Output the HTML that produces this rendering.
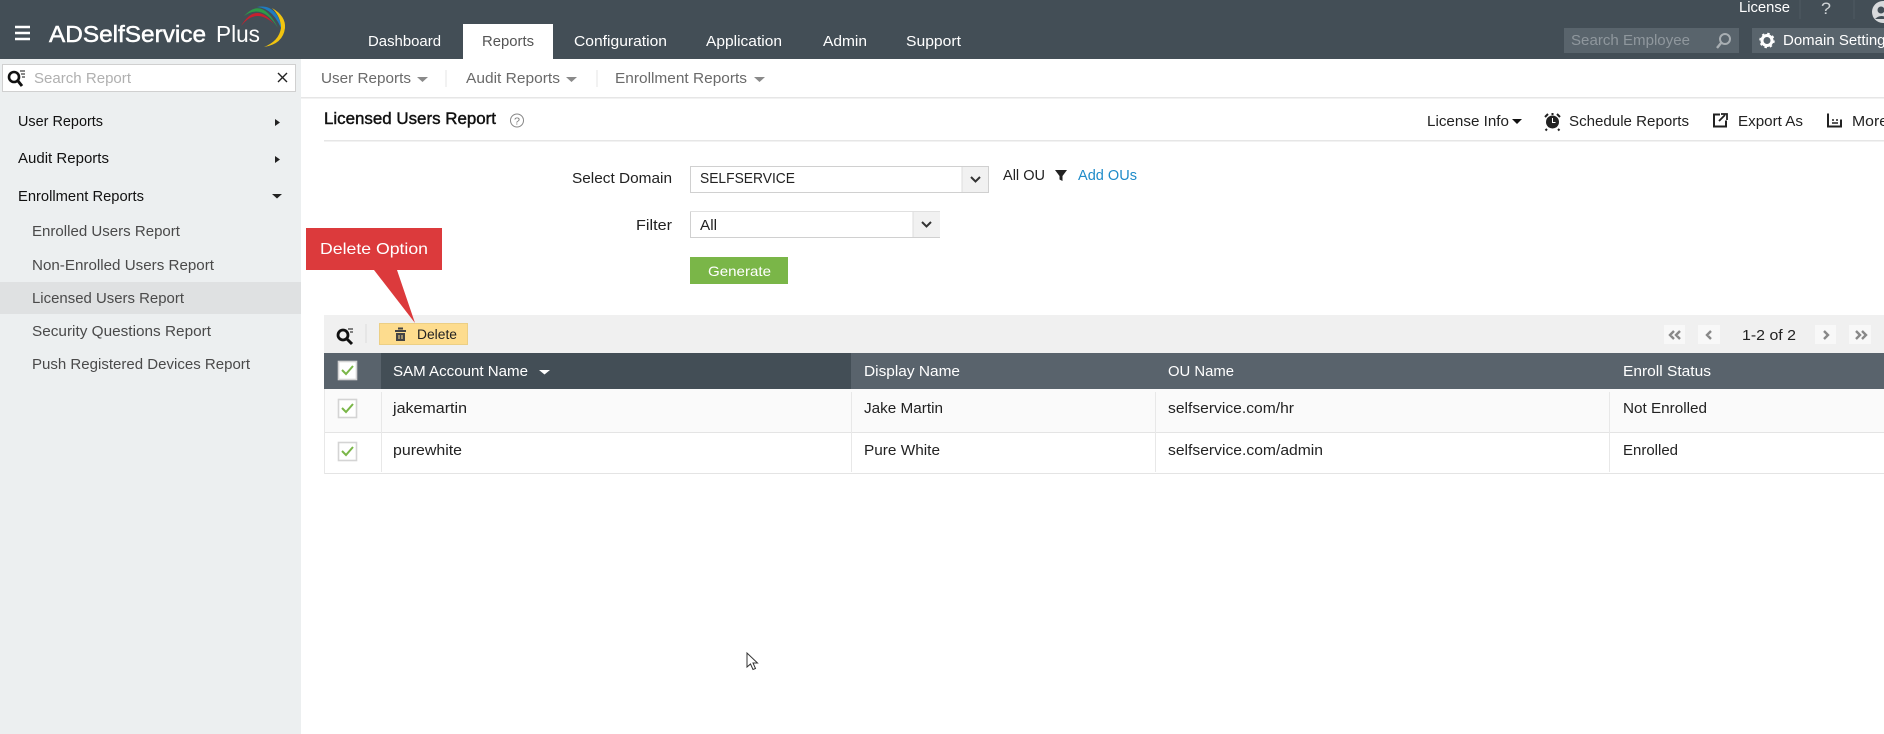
<!DOCTYPE html>
<html lang="en"><head><meta charset="utf-8"><title>Licensed Users Report - ADSelfService Plus</title>
<style>
html,body{margin:0;padding:0;background:#fff;width:1884px;height:734px;overflow:hidden}
svg{display:block}
text{font-family:"Liberation Sans",sans-serif;font-size:14.5px;fill:#222}
.w{fill:#fff}.s{fill:#4a4a4a}.n{fill:#6a6a6a}.b{font-size:15px;fill:#111}
</style></head><body>
<svg width="1884" height="734" viewBox="0 0 1884 734" xmlns="http://www.w3.org/2000/svg">
<!-- header -->
<rect width="1884" height="59" fill="#434e56"/>
<path d="M15 27h15M15 33h15M15 39h15" stroke="#fff" stroke-width="2.4"/>
<text class="w" x="49" y="42" textLength="157" lengthAdjust="spacingAndGlyphs" style="font-size:23px;stroke:#fff;stroke-width:.5">ADSelfService</text>
<text class="w" x="216" y="42" textLength="44" lengthAdjust="spacingAndGlyphs" style="font-size:23px">Plus</text>
<path d="M241 26Q256 1 274 24Q256 7 241 26Z" fill="#c8202f"/>
<path d="M244 16Q262 -4 278 28Q262 3 244 16Z" fill="#2e9b48"/>
<path d="M257 7Q278 3 283 33Q274 8 257 7Z" fill="#1f7cc0"/>
<path d="M272 8Q286 16 285 28Q283 44 264 47Q279 41 281 28Q281 17 272 8Z" fill="#f1c40f"/>
<rect x="463" y="24" width="90" height="35" fill="#fff"/>
<text class="w" x="368" y="46" textLength="73" lengthAdjust="spacingAndGlyphs">Dashboard</text>
<text x="482" y="46" textLength="52" lengthAdjust="spacingAndGlyphs" style="fill:#555">Reports</text>
<text class="w" x="574" y="46" textLength="93" lengthAdjust="spacingAndGlyphs">Configuration</text>
<text class="w" x="706" y="46" textLength="76" lengthAdjust="spacingAndGlyphs">Application</text>
<text class="w" x="823" y="46" textLength="44" lengthAdjust="spacingAndGlyphs">Admin</text>
<text class="w" x="906" y="46" textLength="55" lengthAdjust="spacingAndGlyphs">Support</text>
<text class="w" x="1739" y="12" textLength="51" lengthAdjust="spacingAndGlyphs">License</text>
<path d="M1800 0v19M1854 0v19" stroke="#4f5a62"/>
<text x="1821" y="14" textLength="10" lengthAdjust="spacingAndGlyphs" style="fill:#cfd3d6;font-size:17px">?</text>
<circle cx="1883" cy="12" r="11" fill="#d8dadc"/>
<circle cx="1881" cy="10" r="3.500" fill="#434e56"/>
<path d="M1875 19q6-6 14 0z" fill="#434e56"/>
<rect x="1564" y="28" width="175" height="25" fill="#59646c"/>
<text x="1571" y="45" textLength="119" lengthAdjust="spacingAndGlyphs" style="fill:#8f979d">Search Employee</text>
<circle cx="1725" cy="39" r="5" fill="none" stroke="#a8aeb2" stroke-width="2"/>
<path d="M1721 43l-4 5" stroke="#a8aeb2" stroke-width="2.4"/>
<rect x="1752" y="28" width="132" height="25" fill="#59646c"/>
<circle cx="1767" cy="40.500" r="5" fill="none" stroke="#fff" stroke-width="3"/>
<circle cx="1767" cy="40.500" r="7" fill="none" stroke="#fff" stroke-width="1.500" stroke-dasharray="2.500 3"/>
<text class="w" x="1783" y="45" textLength="110" lengthAdjust="spacingAndGlyphs">Domain Settings</text>
<!-- sidebar -->
<rect y="59" width="301" height="675" fill="#eceff0"/>
<rect x="2.500" y="64.500" width="293" height="27" fill="#fff" stroke="#d0d0d0"/>
<circle cx="14" cy="77" r="5" fill="none" stroke="#111" stroke-width="2.600"/>
<path d="M18 81l4 5" stroke="#111" stroke-width="3"/>
<path d="M20 71h5M21 74h4M22 77h3" stroke="#111" stroke-width="1"/>
<text x="34" y="83" textLength="97" lengthAdjust="spacingAndGlyphs" style="fill:#b0b0b0">Search Report</text>
<path d="M278 73l9 9M287 73l-9 9" stroke="#222" stroke-width="1.400"/>
<text class="b" x="18" y="126" textLength="85" lengthAdjust="spacingAndGlyphs">User Reports</text>
<text class="b" x="18" y="163" textLength="91" lengthAdjust="spacingAndGlyphs">Audit Reports</text>
<text class="b" x="18" y="201" textLength="126" lengthAdjust="spacingAndGlyphs">Enrollment Reports</text>
<path d="M275 119l5 3.500-5 3.500zM275 156l5 3.500-5 3.500zM272 194h10l-5 4.500z" fill="#222"/>
<rect y="282" width="301" height="32" fill="#dfe1e2"/>
<text class="s" x="32" y="236" textLength="148" lengthAdjust="spacingAndGlyphs">Enrolled Users Report</text>
<text class="s" x="32" y="270" textLength="182" lengthAdjust="spacingAndGlyphs">Non-Enrolled Users Report</text>
<text class="s" x="32" y="303" textLength="152" lengthAdjust="spacingAndGlyphs">Licensed Users Report</text>
<text class="s" x="32" y="336" textLength="179" lengthAdjust="spacingAndGlyphs">Security Questions Report</text>
<text class="s" x="32" y="369" textLength="218" lengthAdjust="spacingAndGlyphs">Push Registered Devices Report</text>
<!-- sub nav -->
<rect x="301" y="97" width="1583" height="1.500" fill="#e6e6e6"/>
<text class="n" x="321" y="83" textLength="90" lengthAdjust="spacingAndGlyphs">User Reports</text>
<text class="n" x="466" y="83" textLength="94" lengthAdjust="spacingAndGlyphs">Audit Reports</text>
<text class="n" x="615" y="83" textLength="132" lengthAdjust="spacingAndGlyphs">Enrollment Reports</text>
<path d="M417 77h11l-5.500 5zM566 77h11l-5.500 5zM754 77h11l-5.500 5z" fill="#8a8a8a"/>
<path d="M446 70v17M597 70v17" stroke="#e6e6e6"/>
<!-- title bar -->
<text x="324" y="124" textLength="172" lengthAdjust="spacingAndGlyphs" style="font-size:17px;fill:#111;stroke:#111;stroke-width:.45">Licensed Users Report</text>
<circle cx="517" cy="120.500" r="6.500" fill="none" stroke="#888"/>
<text x="514" y="124.500" textLength="6" lengthAdjust="spacingAndGlyphs" style="font-size:10px;fill:#777">?</text>
<text x="1427" y="126" textLength="82" lengthAdjust="spacingAndGlyphs">License Info</text>
<path d="M1512 119h10l-5 5z" fill="#111"/>
<circle cx="1552.500" cy="122" r="6.500" fill="#222"/>
<path d="M1552.500 118v4.500h3" stroke="#fff" fill="none"/>
<path d="M1545 117l3-3M1560 117l-3-3M1552.500 113v2M1547 129l-1.500 1.500M1558 129l1.500 1.500" stroke="#222" stroke-width="2"/>
<text x="1569" y="126" textLength="120" lengthAdjust="spacingAndGlyphs">Schedule Reports</text>
<path d="M1720 114.500h-6v12h12v-6" fill="none" stroke="#222" stroke-width="2"/>
<path d="M1719 121l6-6M1721 114h6v6" fill="none" stroke="#222" stroke-width="1.800"/>
<text x="1738" y="126" textLength="65" lengthAdjust="spacingAndGlyphs">Export As</text>
<path d="M1828 113.500v13h13v-7" fill="none" stroke="#222" stroke-width="2"/>
<path d="M1832 120h2M1836 120h2M1832 123h6" stroke="#222" stroke-width="1.600"/>
<text x="1852" y="126" textLength="36" lengthAdjust="spacingAndGlyphs">More</text>
<rect x="324" y="140" width="1560" height="1.500" fill="#e6e6e6"/>
<!-- form -->
<text x="572" y="183" textLength="100" lengthAdjust="spacingAndGlyphs">Select Domain</text>
<rect x="690.500" y="166.500" width="298" height="26" fill="#fff" stroke="#d0d0d0"/>
<rect x="962" y="167" width="26" height="25" fill="#f1f1f1"/>
<path d="M962 167v25" stroke="#ddd"/>
<path d="M971 177l4.500 4.500 4.500-4.500" fill="none" stroke="#333" stroke-width="2"/>
<text x="700" y="183" textLength="95" lengthAdjust="spacingAndGlyphs">SELFSERVICE</text>
<text x="1003" y="180" textLength="42" lengthAdjust="spacingAndGlyphs">All OU</text>
<path d="M1055 170h12l-4.500 6v5l-3 -1.500v-3.500z" fill="#222"/>
<text x="1078" y="180" textLength="59" lengthAdjust="spacingAndGlyphs" style="fill:#1e8bc9">Add OUs</text>
<text x="636" y="230" textLength="36" lengthAdjust="spacingAndGlyphs">Filter</text>
<path d="M690.500 211v26.500H939.500V211" fill="#fff" stroke="#d0d0d0"/>
<path d="M690 211.500h250" stroke="#e0e0e0"/>
<rect x="913" y="212" width="27" height="25" fill="#f1f1f1"/>
<path d="M913 212v25" stroke="#ddd"/>
<path d="M922 222l4.500 4.500 4.500-4.500" fill="none" stroke="#333" stroke-width="2"/>
<text x="700" y="230" textLength="17" lengthAdjust="spacingAndGlyphs">All</text>
<rect x="690" y="257" width="98" height="27" fill="#7ab648"/>
<text class="w" x="708" y="276" textLength="63" lengthAdjust="spacingAndGlyphs" style="font-size:14px">Generate</text>
<!-- toolbar -->
<rect x="324" y="315" width="1560" height="38" fill="#f0f0f0"/>
<circle cx="343" cy="335" r="5" fill="none" stroke="#111" stroke-width="2.800"/>
<path d="M347 339l5 5" stroke="#111" stroke-width="3"/>
<path d="M348 329h5M350 332h3" stroke="#111"/>
<path d="M366 324v19" stroke="#ddd"/>
<rect x="379.500" y="323.500" width="88" height="21" fill="#fddc8e" stroke="#eccf85"/>
<path d="M395 331h11M398 328.500h5" stroke="#444" stroke-width="2"/>
<path d="M396 333h9v8h-9z" fill="#444"/>
<path d="M399 335v4M402 335v4" stroke="#fddc8e"/>
<text x="417" y="339" textLength="40" lengthAdjust="spacingAndGlyphs" style="font-size:13.500px;fill:#222">Delete</text>
<g fill="#f8f8f8"><rect x="1664" y="325" width="21" height="19"/><rect x="1698" y="325" width="22" height="19"/><rect x="1815" y="325" width="21" height="19"/><rect x="1849" y="325" width="22" height="19"/></g>
<g fill="none" stroke="#888" stroke-width="2.400">
<path d="M1674 331l-4 4 4 4M1680 331l-4 4 4 4M1711 331l-4 4 4 4M1824 331l4 4-4 4M1856 331l4 4-4 4M1862 331l4 4-4 4"/>
</g>
<text x="1742" y="340" textLength="54" lengthAdjust="spacingAndGlyphs">1-2 of 2</text>
<!-- table -->
<rect x="324" y="353" width="1560" height="36" fill="#59636c"/>
<rect x="381" y="353" width="470" height="36" fill="#434e56"/>
<rect x="324" y="389" width="1560" height="43" fill="#fafafa"/>
<path d="M324 432.500h1560M324 473.500h1560" stroke="#e4e4e4"/>
<path d="M324.500 389v85M381.500 392v80M851.500 392v80M1155.500 392v80M1609.500 392v80" stroke="#e8e8e8"/>
<g fill="#fff" stroke="#d4d4d4" stroke-width="1.600"><rect x="338.500" y="361.500" width="18" height="18"/><rect x="338.500" y="399.500" width="18" height="18"/><rect x="338.500" y="442.500" width="18" height="18"/></g>
<g fill="none" stroke="#7ab648" stroke-width="2"><path d="M342 370l4 4 7-8M342 408l4 4 7-8M342 451l4 4 7-8"/></g>
<text class="w" x="393" y="376" textLength="135" lengthAdjust="spacingAndGlyphs">SAM Account Name</text>
<path d="M539 370h11l-5.500 4.500z" fill="#fff"/>
<text class="w" x="864" y="376" textLength="96" lengthAdjust="spacingAndGlyphs">Display Name</text>
<text class="w" x="1168" y="376" textLength="66" lengthAdjust="spacingAndGlyphs">OU Name</text>
<text class="w" x="1623" y="376" textLength="88" lengthAdjust="spacingAndGlyphs">Enroll Status</text>
<text x="393" y="413" textLength="74" lengthAdjust="spacingAndGlyphs">jakemartin</text>
<text x="864" y="413" textLength="79" lengthAdjust="spacingAndGlyphs">Jake Martin</text>
<text x="1168" y="413" textLength="126" lengthAdjust="spacingAndGlyphs">selfservice.com/hr</text>
<text x="1623" y="413" textLength="84" lengthAdjust="spacingAndGlyphs">Not Enrolled</text>
<text x="393" y="455" textLength="69" lengthAdjust="spacingAndGlyphs">purewhite</text>
<text x="864" y="455" textLength="76" lengthAdjust="spacingAndGlyphs">Pure White</text>
<text x="1168" y="455" textLength="155" lengthAdjust="spacingAndGlyphs">selfservice.com/admin</text>
<text x="1623" y="455" textLength="55" lengthAdjust="spacingAndGlyphs">Enrolled</text>
<!-- callout -->
<path d="M306 228H442V270H397L415 323L374 270H306Z" fill="#dc3a3c"/>
<text class="w" x="320" y="254" textLength="108" lengthAdjust="spacingAndGlyphs" style="font-size:16px">Delete Option</text>
<!-- cursor -->
<path d="M747 653v14l3.500-3 2.500 5.500 2.500-1-2.500-5.500h4.500z" fill="#fff" stroke="#333"/>
</svg>
</body></html>
